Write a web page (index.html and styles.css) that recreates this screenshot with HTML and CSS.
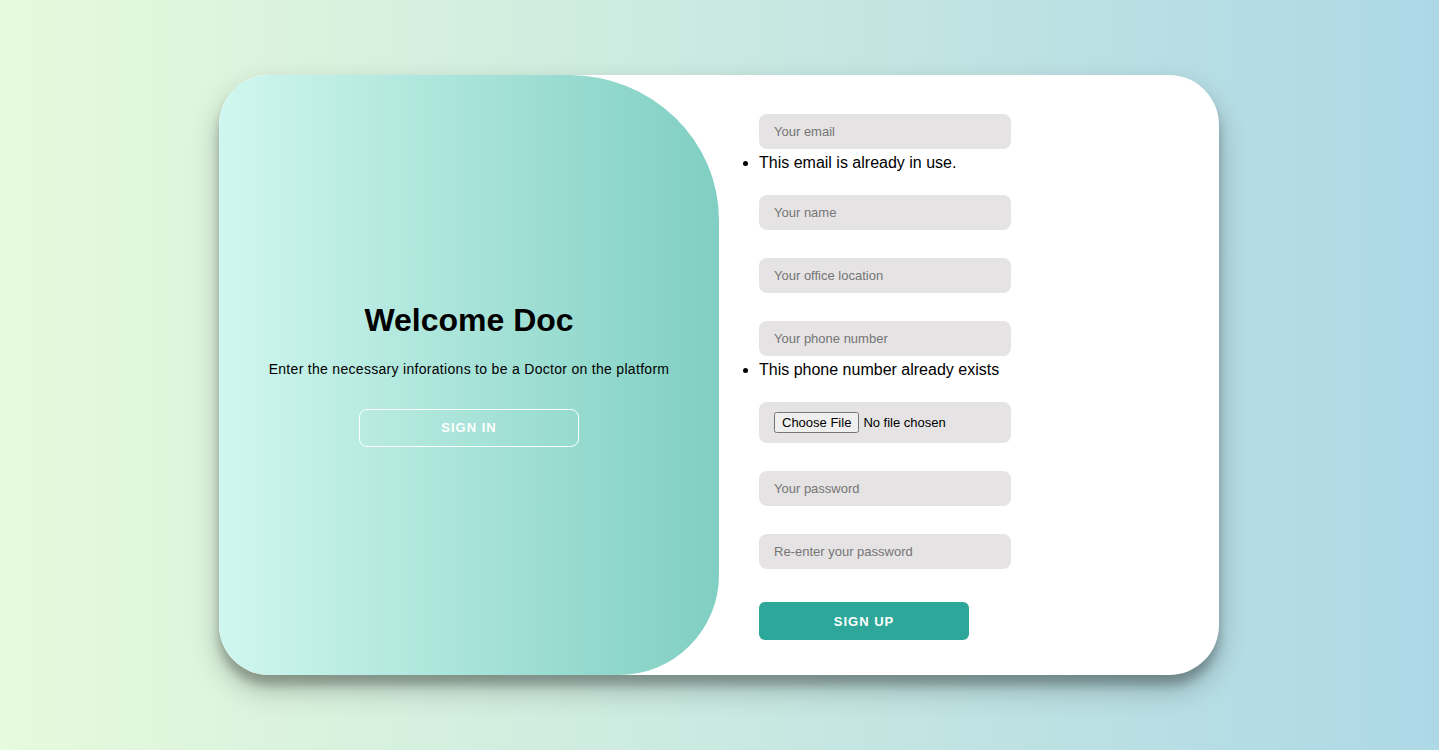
FILE: index.html
```html
<!DOCTYPE html>
<html lang="en">
<head>
<meta charset="utf-8">
<title>Sign up - Doctor</title>
<link rel="stylesheet" href="styles.css">
</head>
<body>
<div class="container">
  <div class="overlay-panel">
    <h1 class="title">Welcome Doc</h1>
    <p class="subtitle">Enter the necessary inforations to be a Doctor on the platform</p>
    <button class="ghost-btn" type="button">Sign In</button>
  </div>
  <div class="form-panel">
    <form class="signup-form">
      <div class="field">
        <input class="text-input" type="email" placeholder="Your email">
        <ul class="errors"><li>This email is already in use.</li></ul>
      </div>
      <div class="field">
        <input class="text-input" type="text" placeholder="Your name">
      </div>
      <div class="field">
        <input class="text-input" type="text" placeholder="Your office location">
      </div>
      <div class="field">
        <input class="text-input" type="tel" placeholder="Your phone number">
        <ul class="errors"><li>This phone number already exists</li></ul>
      </div>
      <div class="field">
        <input class="text-input file-input" type="file">
      </div>
      <div class="field">
        <input class="text-input" type="password" placeholder="Your password">
      </div>
      <div class="field">
        <input class="text-input" type="password" placeholder="Re-enter your password">
      </div>
      <div class="field field-submit">
        <button class="primary-btn" type="submit">Sign Up</button>
      </div>
    </form>
  </div>
</div>
</body>
</html>
```
FILE: styles.css
```css
* {
  box-sizing: border-box;
}

html, body {
  margin: 0;
  height: 100%;
}

body {
  font-family: "Liberation Sans", Arial, sans-serif;
  background: linear-gradient(to right, #e6fadc, #add8e6);
  display: flex;
  align-items: center;
  justify-content: center;
  height: 100vh;
  padding-right: 1px;
  overflow: hidden;
}

.container {
  width: 1000px;
  height: 600px;
  flex-shrink: 0;
  background: #fff;
  border-radius: 50px;
  box-shadow: 0 14px 28px rgba(0, 0, 0, 0.25), 0 10px 10px rgba(0, 0, 0, 0.22);
  overflow: hidden;
  display: flex;
}

.overlay-panel {
  width: 500px;
  height: 100%;
  flex-shrink: 0;
  background: linear-gradient(to right, #d0f7ef, #80cfc2);
  border-radius: 50px 150px 100px 50px / 50px 145px 100px 50px;
  display: flex;
  flex-direction: column;
  align-items: center;
  justify-content: center;
  padding-bottom: 2px;
  text-align: center;
  color: #000;
}

.title {
  font-size: 32px;
  font-weight: bold;
  margin: 0;
}

.subtitle {
  font-size: 14px;
  line-height: 20px;
  letter-spacing: 0.3px;
  margin: 20px 0 30px;
}

.ghost-btn {
  width: 220px;
  height: 38px;
  background: transparent;
  border: 1px solid #fff;
  border-radius: 8px;
  color: #fff;
  font-family: "Liberation Sans", Arial, sans-serif;
  font-size: 13px;
  font-weight: bold;
  letter-spacing: 1px;
  text-transform: uppercase;
  cursor: pointer;
}

.form-panel {
  flex: 1;
  padding: 39px 40px 0;
}

.signup-form {
  display: flex;
  flex-direction: column;
  align-items: flex-start;
}

.field {
  margin-bottom: 28px;
}

.field-submit {
  margin-top: 5px;
}

.text-input {
  display: block;
  width: 252px;
  height: 35px;
  padding: 0 15px;
  border: none;
  border-radius: 8px;
  background: #e5e3e4;
  font-family: "Liberation Sans", Arial, sans-serif;
  font-size: 13px;
  color: #000;
  outline: none;
}

.text-input::placeholder {
  color: #757575;
}

.file-input {
  height: 41px;
  padding: 10px 15px;
  font-size: 13px;
}

.errors {
  margin: 5px 0 -5px;
  padding: 0;
  font-size: 16px;
  line-height: 18px;
  list-style: disc;
  color: #000;
}

.errors li {
  margin: 0;
}

.primary-btn {
  width: 210px;
  height: 38px;
  border: none;
  border-radius: 6px;
  background: #2da799;
  color: #fff;
  font-family: "Liberation Sans", Arial, sans-serif;
  font-size: 13px;
  font-weight: bold;
  letter-spacing: 1px;
  text-transform: uppercase;
  cursor: pointer;
}
```
